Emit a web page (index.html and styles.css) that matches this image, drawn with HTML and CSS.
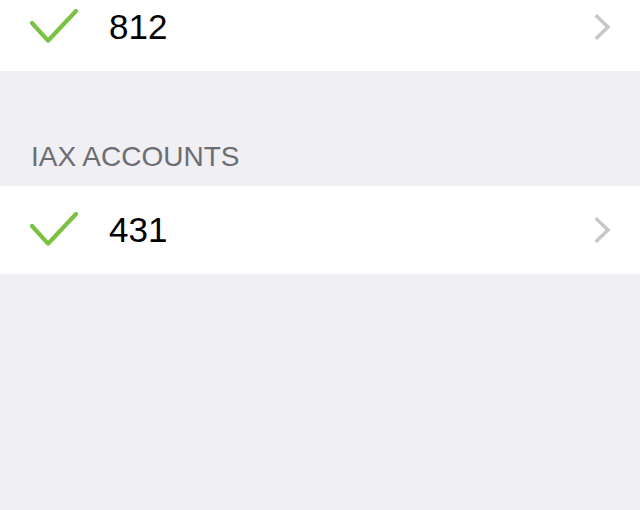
FILE: index.html
```html
<!DOCTYPE html>
<html>
<head>
<meta charset="utf-8">
<link rel="stylesheet" href="styles.css">
</head>
<body>
<div class="screen">
  <div class="group">
    <div class="row">
      <svg class="check" width="50" height="36" viewBox="0 0 50 36"><polyline points="2,14 18,31.7 46,2" fill="none" stroke="#7cc242" stroke-width="4.2" stroke-linecap="round" stroke-linejoin="round"/></svg>
      <span class="label">812</span>
      <svg class="chev" width="20" height="28" viewBox="0 0 20 28"><polyline points="4,3.5 15,14 4,24.5" fill="none" stroke="#c7c7cc" stroke-width="3.5" stroke-linecap="square"/></svg>
    </div>
  </div>
  <div class="header">IAX ACCOUNTS</div>
  <div class="group">
    <div class="row">
      <svg class="check" width="50" height="36" viewBox="0 0 50 36"><polyline points="2,14 18,31.7 46,2" fill="none" stroke="#7cc242" stroke-width="4.2" stroke-linecap="round" stroke-linejoin="round"/></svg>
      <span class="label">431</span>
      <svg class="chev" width="20" height="28" viewBox="0 0 20 28"><polyline points="4,3.5 15,14 4,24.5" fill="none" stroke="#c7c7cc" stroke-width="3.5" stroke-linecap="square"/></svg>
    </div>
  </div>
</div>
</body>
</html>
```
FILE: styles.css
```css
html, body {
  margin: 0;
  padding: 0;
  background: #efeff4;
  font-family: "Liberation Sans", Arial, sans-serif;
  overflow: hidden;
}
.screen {
  margin-top: -17px;
  display: flex;
  flex-direction: column;
}
.group {
  background: #ffffff;
}
.row {
  height: 88px;
  display: flex;
  align-items: center;
  padding-left: 30px;
  padding-right: 27px;
}
.check {
  display: block;
  flex: none;
}
.label {
  margin-left: 29px;
  font-size: 35px;
  color: #000;
  flex: 1;
}
.chev {
  display: block;
  flex: none;
}
.header {
  padding: 70px 0 13px 31px;
  font-size: 28px;
  line-height: 32px;
  color: #6d6d72;
}
```
